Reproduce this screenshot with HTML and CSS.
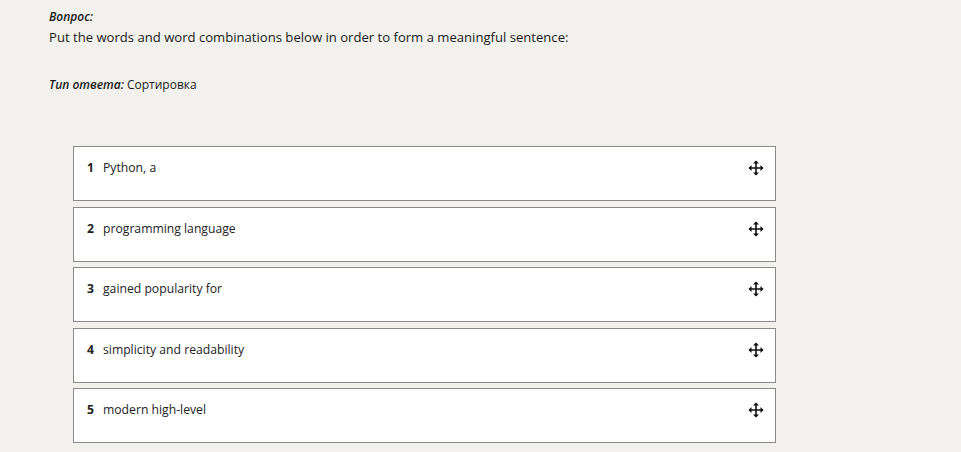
FILE: index.html
```html
<!DOCTYPE html>
<html>
<head>
<meta charset="utf-8">
<link rel="stylesheet" href="styles.css">
</head>
<body>
<div class="page">
  <div class="label">Вопрос:</div>
  <div class="question">Put the words and word combinations below in order to form a meaningful sentence:</div>
  <div class="type"><span class="label">Тип ответа:</span> Сортировка</div>
  <ul class="list">
    <li class="item"><span class="num">1</span><span class="txt">Python, a</span><svg class="move" viewBox="0 0 16 16"><path d="M8 1.5v13M1.5 8h13"/><path class="h" d="M8 0.5l-3 3h6zM8 15.5l-3-3h6zM0.5 8l3-3v6zM15.5 8l-3-3v6z"/></svg></li>
    <li class="item"><span class="num">2</span><span class="txt">programming language</span><svg class="move" viewBox="0 0 16 16"><path d="M8 1.5v13M1.5 8h13"/><path class="h" d="M8 0.5l-3 3h6zM8 15.5l-3-3h6zM0.5 8l3-3v6zM15.5 8l-3-3v6z"/></svg></li>
    <li class="item"><span class="num">3</span><span class="txt">gained popularity for</span><svg class="move" viewBox="0 0 16 16"><path d="M8 1.5v13M1.5 8h13"/><path class="h" d="M8 0.5l-3 3h6zM8 15.5l-3-3h6zM0.5 8l3-3v6zM15.5 8l-3-3v6z"/></svg></li>
    <li class="item"><span class="num">4</span><span class="txt">simplicity and readability</span><svg class="move" viewBox="0 0 16 16"><path d="M8 1.5v13M1.5 8h13"/><path class="h" d="M8 0.5l-3 3h6zM8 15.5l-3-3h6zM0.5 8l3-3v6zM15.5 8l-3-3v6z"/></svg></li>
    <li class="item"><span class="num">5</span><span class="txt">modern high-level</span><svg class="move" viewBox="0 0 16 16"><path d="M8 1.5v13M1.5 8h13"/><path class="h" d="M8 0.5l-3 3h6zM8 15.5l-3-3h6zM0.5 8l3-3v6zM15.5 8l-3-3v6z"/></svg></li>
  </ul>
</div>
</body>
</html>
```
FILE: styles.css
```css
html, body {
  margin: 0;
  padding: 0;
  background: #f2f1ed;
}
body {
  font-family: "Open Sans", "Noto Sans", sans-serif;
  color: #1a1a1a;
}
.page {
  padding: 8px 0 0 49px;
}
.label {
  font-size: 12px;
  font-weight: 600;
  font-style: italic;
  line-height: 17px;
}
.question {
  font-size: 13.1px;
  line-height: 20px;
  margin-top: 2px;
}
.type {
  font-size: 12px;
  line-height: 17px;
  margin-top: 29px;
}
.list {
  list-style: none;
  margin: 53px 0 0 24px;
  padding: 0;
  width: 703px;
  display: flex;
  flex-direction: column;
  gap: 5.5px;
}
.item {
  box-sizing: border-box;
  height: 55px;
  background: #fff;
  border: 1px solid #8a8a8a;
  display: flex;
  align-items: flex-start;
  padding: 12px 11px 0 13px;
  font-size: 12.2px;
  line-height: 18px;
  color: #222;
}
.num {
  font-weight: 700;
  width: 16px;
}
.txt {
  flex: 1;
}
.move {
  width: 16px;
  height: 16px;
  margin-top: 1px;
}
.move path {
  stroke: #111;
  stroke-width: 1.6;
  fill: none;
}
.move path.h {
  stroke: none;
  fill: #111;
}
```
